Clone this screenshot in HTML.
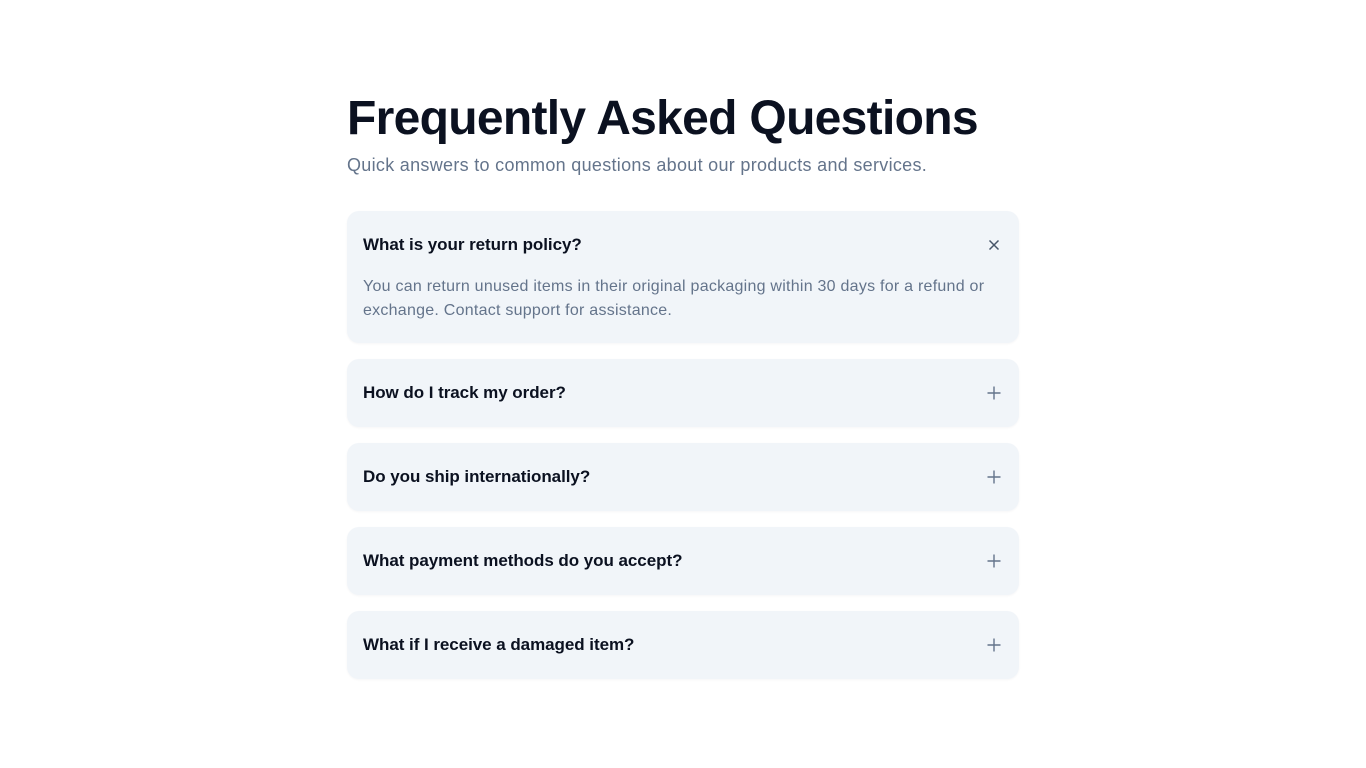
<!DOCTYPE html>
<html><head><meta charset="utf-8"><style>
*{margin:0;padding:0;box-sizing:border-box}
body{width:1366px;height:768px;background:#fff;font-family:"Liberation Sans",sans-serif;color:#0f172a}
.wrap{position:absolute;left:347px;top:91px;width:672px}
h1{font-size:48px;font-weight:700;letter-spacing:-0.7px;line-height:56px;color:#0b1120}
.sub{margin-top:6px;font-size:18px;color:#64748b;line-height:24px;letter-spacing:0.3px}
.list{position:absolute;top:120px;left:0;width:672px}
.card{background:#f1f5f9;border-radius:12px;margin-bottom:16px;position:relative;box-shadow:0 1px 2px rgba(15,23,42,0.04)}
.q{height:68px;padding:0 16px;display:flex;align-items:center;font-size:17px;font-weight:700;letter-spacing:-0.05px;color:#0b1120}
.ic{position:absolute;right:18px;top:27px;width:14px;height:14px}
.a{padding:0 16px 20px;margin-top:-4px;font-size:16px;line-height:24px;color:#64748b;letter-spacing:0.25px}
</style></head><body>
<div class="wrap">
<h1>Frequently Asked Questions</h1>
<div class="sub">Quick answers to common questions about our products and services.</div>
<div class="list">
<div class="card"><div class="q">What is your return policy?</div>
<svg class="ic" viewBox="0 0 14 14"><path d="M2.5 2.5L11.5 11.5M11.5 2.5L2.5 11.5" stroke="#475569" stroke-width="1.5" fill="none"/></svg>
<div class="a">You can return unused items in their original packaging within 30 days for a refund or exchange. Contact support for assistance.</div></div>
<div class="card"><div class="q">How do I track my order?</div><svg class="ic" viewBox="0 0 14 14"><path d="M7 0.5V13.5M0.5 7H13.5" stroke="#64748b" stroke-width="1.4" fill="none"/></svg></div>
<div class="card"><div class="q">Do you ship internationally?</div><svg class="ic" viewBox="0 0 14 14"><path d="M7 0.5V13.5M0.5 7H13.5" stroke="#64748b" stroke-width="1.4" fill="none"/></svg></div>
<div class="card"><div class="q">What payment methods do you accept?</div><svg class="ic" viewBox="0 0 14 14"><path d="M7 0.5V13.5M0.5 7H13.5" stroke="#64748b" stroke-width="1.4" fill="none"/></svg></div>
<div class="card"><div class="q">What if I receive a damaged item?</div><svg class="ic" viewBox="0 0 14 14"><path d="M7 0.5V13.5M0.5 7H13.5" stroke="#64748b" stroke-width="1.4" fill="none"/></svg></div>
</div></div>
</body></html>
